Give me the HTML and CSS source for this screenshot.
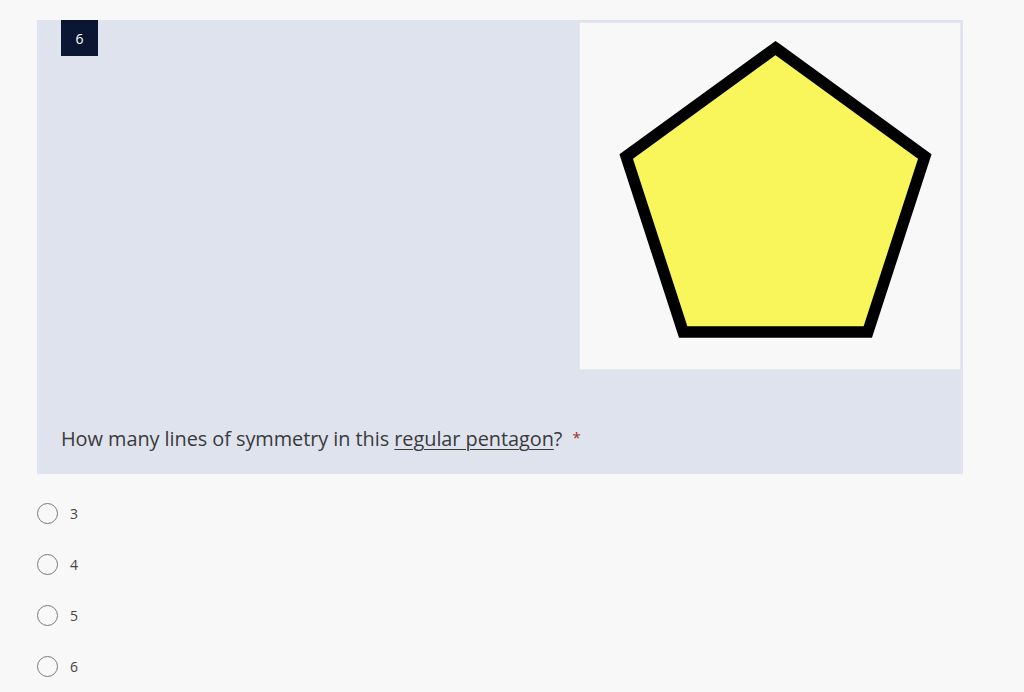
FILE: index.html
```html
<!DOCTYPE html>
<html>
<head>
<meta charset="utf-8">
<link rel="stylesheet" href="styles.css">
</head>
<body>
<div class="card">
  <div class="top">
    <div class="badge">6</div>
    <div class="figure">
      <svg width="380" height="346" viewBox="0 0 380 346">
        <polygon points="195.5,25 344.8,133.5 287.8,309 103.2,309 46.2,133.5" fill="#f8f65a" stroke="#000" stroke-width="11.5" stroke-linejoin="miter"/>
      </svg>
    </div>
  </div>
  <div class="question">How many lines of symmetry in this <span class="u">regular pentagon</span>? <span class="req">*</span></div>
</div>
<div class="options">
  <label class="opt"><span class="radio"></span><span class="lbl">3</span></label>
  <label class="opt"><span class="radio"></span><span class="lbl">4</span></label>
  <label class="opt"><span class="radio"></span><span class="lbl">5</span></label>
  <label class="opt"><span class="radio"></span><span class="lbl">6</span></label>
</div>
</body>
</html>
```
FILE: styles.css
```css
html, body { margin: 0; padding: 0; }
body {
  background: #f8f8f8;
  font-family: "Open Sans", "Noto Sans", sans-serif;
  color: #333;
  width: 1024px;
  height: 692px;
  overflow: hidden;
}
.card {
  margin: 20px 0 0 37px;
  width: 926px;
  background: #dfe3ee;
  padding-bottom: 20px;
}
.top {
  display: flex;
  justify-content: space-between;
  align-items: flex-start;
  padding-left: 24px;
  padding-right: 2px;
}
.badge {
  width: 37px;
  height: 36px;
  background: #0b1633;
  color: #fff;
  font-size: 14px;
  display: flex;
  align-items: center;
  justify-content: center;
}
.figure {
  margin-top: 2px;
  width: 380px;
  height: 346px;
  background: #f8f8f8;
  border: 1px solid #e6e8ef;
}
.figure svg { display: block; }
.question {
  margin-top: 52px;
  padding-left: 24px;
  font-size: 19.9px;
  letter-spacing: -0.05px;
  line-height: 30px;
  color: #3a3a3a;
}
.u { text-decoration: underline; text-underline-offset: 3px; text-decoration-thickness: 1px; }
.req { color: #a4262c; font-size: 15px; margin-left: 5px; vertical-align: 3px; }
.options {
  padding-left: 37px;
  padding-top: 28px;
  display: flex;
  flex-direction: column;
  gap: 29px;
}
.opt {
  display: flex;
  align-items: center;
  height: 22px;
}
.radio {
  width: 19px;
  height: 19px;
  border: 1.5px solid #7a7a7a;
  border-radius: 50%;
  box-sizing: content-box;
}
.lbl {
  margin-left: 12px;
  font-size: 14px;
  color: #444;
}
```
